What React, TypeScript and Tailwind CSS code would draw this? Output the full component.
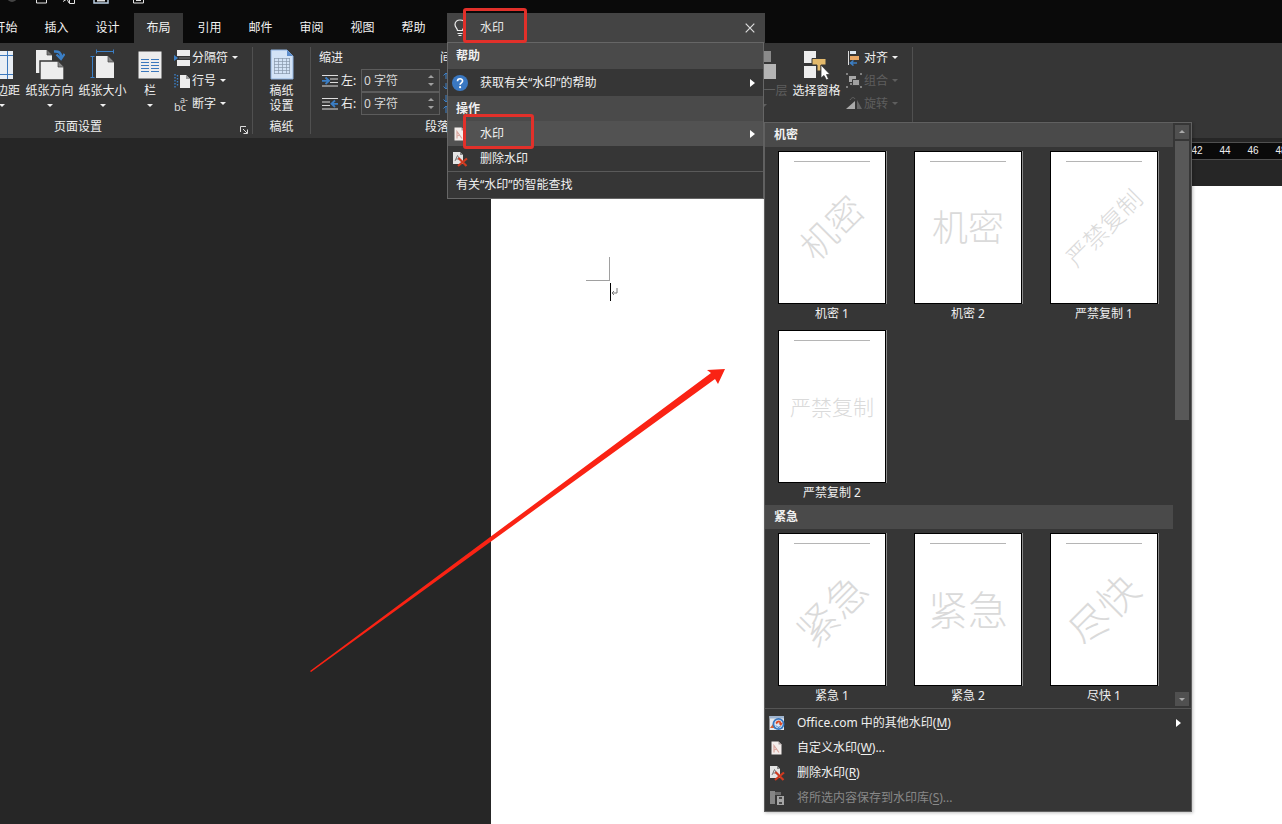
import React, { useState } from 'react';

const tabs = ['开始', '插入', '设计', '布局', '引用', '邮件', '审阅', '视图', '帮助'];
const rulerMarks = [42, 44, 46, 48];

type Mark = { name: string; text: string; style: string };

const galleries: { title: string; items: Mark[] }[] = [
  {
    title: '机密',
    items: [
      { name: '机密 1', text: '机密', style: '-rotate-45 text-[36px] leading-[36px]' },
      { name: '机密 2', text: '机密', style: 'text-[36px] leading-[36px]' },
      { name: '严禁复制 1', text: '严禁复制', style: '-rotate-45 text-[24px] leading-[24px]' },
      { name: '严禁复制 2', text: '严禁复制', style: 'text-[21px] leading-[24px]' },
    ],
  },
  {
    title: '紧急',
    items: [
      { name: '紧急 1', text: '紧急', style: '-rotate-45 text-[40px] leading-[40px]' },
      { name: '紧急 2', text: '紧急', style: 'text-[40px] leading-[40px]' },
      { name: '尽快 1', text: '尽快', style: '-rotate-45 text-[40px] leading-[40px]' },
    ],
  },
];

function Caret() {
  return (
    <svg width="6" height="3" viewBox="0 0 6 3" aria-hidden="true" className="shrink-0">
      <path d="M0 0H6L3 3Z" fill="currentColor" />
    </svg>
  );
}

function RightArrow() {
  return (
    <svg width="5" height="8" viewBox="0 0 5 8" aria-hidden="true" className="shrink-0">
      <path d="M0 0L5 4L0 8Z" fill="#fff" />
    </svg>
  );
}

function MarginsIcon() {
  return (
    <svg width="26" height="30" viewBox="0 0 26 30">
      <rect x="0" y="1" width="24" height="28" fill="#e9eef4" />
      <path d="M5.500 1V29M18.500 1V29M0 5.500H24M0 24.500H24" stroke="#3b78bd" />
    </svg>
  );
}

function OrientationIcon() {
  return (
    <svg width="30" height="32" viewBox="0 0 30 32">
      <path d="M1 1H12L17 6V24H1Z" fill="#ededed" />
      <path d="M12 1V6H17Z" fill="#777" stroke="#444" strokeWidth=".7" />
      <path d="M5 12H23L29 18V31H5Z" fill="#ededed" stroke="#363636" strokeWidth="1.4" />
      <path d="M23 12V18H29Z" fill="#888" stroke="#444" strokeWidth=".7" />
      <path d="M19 2.500C24 2 26 4 26 8" fill="none" stroke="#3b7fc6" strokeWidth="2.600" />
      <path d="M21.500 5.500L26 10L29.500 5" fill="none" stroke="#3b7fc6" strokeWidth="2.200" />
    </svg>
  );
}

function SizeIcon() {
  return (
    <svg width="26" height="32" viewBox="0 0 26 32">
      <path d="M6 7H18L24 13V29H6Z" fill="#ededed" />
      <path d="M18 7V13H24Z" fill="#888" stroke="#444" strokeWidth=".7" />
      <path d="M6 2.500H24M6.500 .5V4.500M23.500 .5V4.500M2.500 7V29M.5 7.500H4.500M.5 28.500H4.500" stroke="#3b7fc6" fill="none" />
    </svg>
  );
}

function ColumnsIcon() {
  return (
    <svg width="24" height="30" viewBox="0 0 24 30">
      <rect x=".5" y="1.500" width="23" height="27" fill="#ededed" />
      <path
        d="M3 9.500H11M13 9.500H21M3 12.500H11M13 12.500H21M3 15.500H11M13 15.500H21M3 18.500H11M13 18.500H21M3 21.500H11M13 21.500H21"
        stroke="#3b78bd"
      />
    </svg>
  );
}

function DraftPaperIcon() {
  return (
    <svg width="24" height="32" viewBox="0 0 24 32">
      <path d="M1 1H17L23 7V30H1Z" fill="#d3e3f6" stroke="#8fb2df" />
      <path d="M17 1V7H23Z" fill="#5d8dcc" />
      <path
        d="M4 9.500H20M4 12.500H20M4 15.500H20M4 18.500H20M4 21.500H20M4 24.500H20M4.500 9V25M8.500 9V25M12.500 9V25M16.500 9V25M19.500 9V25"
        stroke="#8796ab"
        strokeWidth=".7"
      />
    </svg>
  );
}

function BreaksIcon() {
  return (
    <svg width="16" height="16" viewBox="0 0 16 16">
      <path d="M3 0H16V6H3ZM3 10H16V16H3Z" fill="#ededed" />
      <path d="M0 5L4 8L0 11Z" fill="#3b7fc6" />
      <path d="M5 8H16" stroke="#777" />
    </svg>
  );
}

function LineNumbersIcon() {
  return (
    <svg width="16" height="16" viewBox="0 0 16 16">
      <path d="M6 2H12L16 6V15H6Z" fill="#ededed" />
      <path d="M12 2V6H16" fill="#999" />
      <path d="M1 1V15M3.500 2V14" stroke="#3b7fc6" strokeWidth="1.400" strokeDasharray="1.500 1.500" />
    </svg>
  );
}

function HyphenIcon() {
  return (
    <svg width="16" height="16" viewBox="0 0 16 16" aria-hidden="true">
      <text x="0" y="15" fontSize="11" fill="#ddd" fontFamily="Noto Sans, sans-serif">bc</text>
      <text x="6" y="7" fontSize="9" fill="#ddd" fontFamily="Noto Sans, sans-serif">a-</text>
    </svg>
  );
}

function IndentIcon({ right = false }: { right?: boolean }) {
  return (
    <svg width="16" height="14" viewBox="0 0 16 14">
      {right ? (
        <>
          <path d="M0 1.500H16M0 5H8M0 8.500H8M0 12H16" stroke="#ddd" />
          <path d="M16 6.800H10M13 3.500L9.500 6.800L13 10" stroke="#3b7fc6" strokeWidth="1.800" fill="none" />
        </>
      ) : (
        <>
          <path d="M0 1.500H16M8 5H16M8 8.500H16M0 12H16" stroke="#ddd" />
          <path d="M0 6.800H6M3.500 3.500L7 6.800L3.500 10" stroke="#3b7fc6" strokeWidth="1.800" fill="none" />
        </>
      )}
    </svg>
  );
}

function SpacingIcon({ after = false }: { after?: boolean }) {
  return (
    <svg width="12" height="18" viewBox="0 0 12 18">
      {after ? (
        <path d="M3 0V7M.5 4.500L3 7L5.500 4.500M3 18V11M.5 13.500L3 11L5.500 13.500" stroke="#3b7fc6" fill="none" />
      ) : (
        <path d="M3 1V7M.5 3.500L3 1L5.500 3.500M3 17V11M.5 14.500L3 17L5.500 14.500" stroke="#3b7fc6" fill="none" />
      )}
    </svg>
  );
}

function SendBackIcon() {
  return (
    <svg width="26" height="30" viewBox="0 0 26 30">
      <path d="M6 1H20V12H6Z" fill="#8a8a8a" />
      <path d="M8 14H25V29H8Z" fill="#b4b4b4" />
    </svg>
  );
}

function SelectionPaneIcon() {
  return (
    <svg width="28" height="32" viewBox="0 0 28 32">
      <path d="M1 2H13V14H1ZM1 17H13V29H1Z" fill="#ededed" />
      <path d="M9 9.500H23V16H18V22H14V16H9Z" fill="#e3b96b" stroke="#363636" />
      <path d="M18 16V29L21 26.500L23.500 31L25.500 30L23.500 25.500H27Z" fill="#fff" stroke="#363636" strokeWidth=".8" />
    </svg>
  );
}

function AlignIcon() {
  return (
    <svg width="16" height="16" viewBox="0 0 16 16">
      <path d="M2.500 1V15" stroke="#ddd" />
      <path d="M4 1H10V4H4Z" fill="#dce8f4" />
      <path d="M4 6H13V10H4Z" fill="#e8a866" />
      <path d="M11 13H5M7.500 10.500L4.500 13L7.500 15.500" stroke="#3b7fc6" strokeWidth="1.500" fill="none" />
    </svg>
  );
}

function GroupIcon() {
  return (
    <svg width="16" height="16" viewBox="0 0 16 16">
      <path d="M3 3H10V9H3Z" fill="#a8a8a8" />
      <path d="M6.500 6.500H13.500V12.500H6.500Z" fill="#a0a0a0" stroke="#3c3c3c" />
      <path d="M4 10H6V12H4Z" fill="#8a8a8a" />
      <path d="M0 1H2M14 1H16M0 14H2M14 14H16" stroke="#808080" strokeWidth="2" />
    </svg>
  );
}

function RotateIcon() {
  return (
    <svg width="16" height="16" viewBox="0 0 16 16">
      <path d="M0 13H9V5Z" fill="#aaa" />
      <path d="M11 4V13H16Z" fill="#666" />
      <path d="M4 4C6 1 8 1 9 3" stroke="#666" fill="none" />
    </svg>
  );
}

function WatermarkIcon() {
  return (
    <svg width="16" height="16" viewBox="0 0 16 16" className="shrink-0">
      <path d="M2.500 1.500H9.500L12.500 4.500V14.500H2.500Z" fill="#f4eeec" />
      <path d="M9.500 1.500V4.500H12.500Z" fill="#a9a0a0" />
      <path d="M5 12.500V5.500L10 12.500M5 10L8 9" stroke="#d9a79f" strokeWidth="1.200" fill="none" />
    </svg>
  );
}

function RemoveWatermarkIcon() {
  return (
    <svg width="16" height="16" viewBox="0 0 16 16" className="shrink-0">
      <path d="M1 1H8L11 4V13H1Z" fill="#e4e4e4" />
      <path d="M8 1V4H11Z" fill="#888" />
      <path d="M3 10L5.500 4.500L8 9M4 8H7" stroke="#777" fill="none" />
      <path d="M6.500 7L14.500 15M15 7.500L6 15" stroke="#d03a20" strokeWidth="2.200" />
    </svg>
  );
}

function OfficeWebIcon() {
  return (
    <svg width="17" height="16" viewBox="0 0 17 16" className="shrink-0">
      <path d="M.5 1H15V15H.5Z" fill="#e6e9ee" />
      <path d="M.5 1H15V3.500H.5Z" fill="#9fb4cf" />
      <path d="M1 13H7L4 9Z" fill="#d9622f" />
      <circle cx="9.500" cy="9" r="6" fill="#3777c0" />
      <circle cx="9.500" cy="9" r="4.200" fill="#dbe9f7" />
      <path d="M6.500 8C8 4.500 12 5 12.500 8L14 7.500L12 11L9.500 8.500L11 8.300C10.500 7 8.500 7 8 9.500Z" fill="#dc4a26" />
      <path d="M7 10.500L9 12.500L11.500 11.500" stroke="#3777c0" fill="none" />
    </svg>
  );
}

function SaveGalleryIcon() {
  return (
    <svg width="16" height="16" viewBox="0 0 16 16" className="shrink-0">
      <path d="M1 1H6V14H1Z" fill="#858585" />
      <path d="M6 2H12V5H6Z" fill="#6d6d6d" />
      <path d="M8 6H15V15H8Z" fill="#a5a5a5" />
      <path d="M10 7H13V9H10ZM10 12H13V14H10Z" fill="#4a4a4a" />
    </svg>
  );
}

function HelpIcon() {
  return (
    <svg width="16" height="16" viewBox="0 0 16 16" className="shrink-0">
      <circle cx="8" cy="8" r="8" fill="#3a78c2" />
      <path d="M5.500 6.200C5.500 3 10.600 3 10.600 6C10.600 7.800 8.100 7.900 8.100 9.700" stroke="#fff" strokeWidth="1.600" fill="none" />
      <circle cx="8.100" cy="12.200" r="1.100" fill="#fff" />
    </svg>
  );
}

function BigButton({
  icon,
  label,
  width,
  caret = true,
  disabled = false,
}: {
  icon: React.ReactNode;
  label: string[];
  width: string;
  caret?: boolean;
  disabled?: boolean;
}) {
  return (
    <button
      disabled={disabled}
      className={`flex shrink-0 flex-col items-center pt-[3px] whitespace-nowrap ${width} ${disabled ? 'text-[#5e5e5e]' : 'text-[#f0f0f0]'}`}
    >
      <span className="mb-0.5 flex h-8 items-center">{icon}</span>
      {label.map((line) => (
        <span key={line} className="leading-[15px]">{line}</span>
      ))}
      {caret && (
        <span className="flex h-[15px] items-center">
          <Caret />
        </span>
      )}
    </button>
  );
}

function SmallButton({ icon, label, disabled = false }: { icon: React.ReactNode; label: string; disabled?: boolean }) {
  return (
    <button
      disabled={disabled}
      className={`flex h-[23px] items-center whitespace-nowrap ${disabled ? 'text-[#5e5e5e]' : 'text-[#f0f0f0]'}`}
    >
      <span className="mr-0.5 w-4">{icon}</span>
      <span className="mr-1">{label}</span>
      <Caret />
    </button>
  );
}

function IndentField({ id, label, right = false }: { id: string; label: string; right?: boolean }) {
  return (
    <div className="flex h-[23px] items-center">
      <IndentIcon right={right} />
      <label htmlFor={id} className="ml-[3px] w-5">{label}</label>
      <div className="flex h-[23px] w-[79px] border border-[#5c5c5c] bg-[#3b3b3b]">
        <input id={id} defaultValue="0 字符" className="w-0 min-w-0 flex-1 bg-transparent pl-0.5 text-[#d8d8d8] outline-none" />
        <span className="flex w-4 flex-col items-center justify-evenly text-[#a0a0a0]">
          <button aria-label="增加" className="rotate-180"><Caret /></button>
          <button aria-label="减少"><Caret /></button>
        </span>
      </div>
    </div>
  );
}

function Divider() {
  return <div className="mt-1 mb-1 w-px shrink-0 bg-[#505050]" />;
}

function RibbonGroup({ label, className, children }: { label: string; className: string; children: React.ReactNode }) {
  return (
    <section className={`flex shrink-0 flex-col pt-[3px] pb-[3px] ${className}`}>
      <div className="flex flex-1">{children}</div>
      <div className="h-4 text-center leading-4">{label}</div>
    </section>
  );
}

function Ribbon() {
  return (
    <div className="flex h-[95px] bg-[#363636] text-[#f0f0f0]">
      <RibbonGroup label="页面设置" className="relative -ml-24 w-[348px]">
        <div className="flex pl-[77px]">
          <BigButton icon={<MarginsIcon />} label={['页边距']} width="w-[42px]" />
          <BigButton icon={<OrientationIcon />} label={['纸张方向']} width="w-[53px]" />
          <BigButton icon={<SizeIcon />} label={['纸张大小']} width="w-[53px]" />
          <BigButton icon={<ColumnsIcon />} label={['栏']} width="w-[42px]" />
          <div className="ml-[3px] flex flex-col">
            <SmallButton icon={<BreaksIcon />} label="分隔符" />
            <SmallButton icon={<LineNumbersIcon />} label="行号" />
            <SmallButton icon={<HyphenIcon />} label="断字" />
          </div>
        </div>
        <button aria-label="页面设置选项" className="absolute right-1 bottom-1">
          <svg width="8" height="8" viewBox="0 0 8 8" aria-hidden="true">
            <path d="M.5 6V.5H6M3 3L7 7M7.500 3.500V7.500H3.500" stroke="#ddd" fill="none" />
          </svg>
        </button>
      </RibbonGroup>
      <Divider />
      <RibbonGroup label="稿纸" className="w-[57px] items-center">
        <BigButton icon={<DraftPaperIcon />} label={['稿纸', '设置']} width="w-[48px]" caret={false} />
      </RibbonGroup>
      <Divider />
      <RibbonGroup label="段落" className="w-[252px]">
        <div className="flex pl-2">
          <div>
            <div className="h-[23px] leading-[23px]">缩进</div>
            <div className="pl-[3px]">
              <IndentField id="indent-left" label="左:" />
              <IndentField id="indent-right" label="右:" right />
            </div>
          </div>
          <div>
            <div className="h-[23px] leading-[23px]">间距</div>
            <div className="flex h-[23px] items-center pl-[3px]"><SpacingIcon /></div>
            <div className="flex h-[23px] items-center pl-[3px]"><SpacingIcon after /></div>
          </div>
        </div>
      </RibbonGroup>
      <RibbonGroup label="" className="w-[349px]">
        <div className="flex flex-1 justify-end">
          <BigButton icon={<SendBackIcon />} label={['下移一层']} width="w-[53px]" disabled />
          <BigButton icon={<SelectionPaneIcon />} label={['选择窗格']} width="w-[53px]" caret={false} />
          <div className="ml-[3px] flex w-[66px] flex-col">
            <SmallButton icon={<AlignIcon />} label="对齐" />
            <SmallButton icon={<GroupIcon />} label="组合" disabled />
            <SmallButton icon={<RotateIcon />} label="旋转" disabled />
          </div>
        </div>
      </RibbonGroup>
      <Divider />
    </div>
  );
}

function GallerySection({ title, items }: { title: string; items: Mark[] }) {
  return (
    <section>
      <h3 className="h-6 bg-[#4a4a4a] pl-[9px] leading-6 font-bold">{title}</h3>
      <div className="grid grid-cols-[repeat(3,108px)] gap-x-7 gap-y-[7px] pt-1 pb-[3px] pl-[13px]">
        {items.map((item) => (
          <button key={item.name} className="flex flex-col">
            <span className="flex h-[153px] w-full flex-col border border-black bg-white px-[15px] pt-[9px] shadow-[1px_0_0_#8a8a8a]">
              <span className="h-px bg-[#b5b5b5]" />
              <span className="flex flex-1 items-center justify-center pb-[10px]">
                <span className={`shrink-0 font-light whitespace-nowrap text-[#dadada] ${item.style}`}>{item.text}</span>
              </span>
            </span>
            <span className="h-[19px] w-full text-center leading-[19px]">{item.name}</span>
          </button>
        ))}
      </div>
    </section>
  );
}

function GalleryCommand({
  icon,
  text,
  hotkey,
  tail = '',
  disabled = false,
  more = false,
}: {
  icon: React.ReactNode;
  text: string;
  hotkey: string;
  tail?: string;
  disabled?: boolean;
  more?: boolean;
}) {
  return (
    <button disabled={disabled} className={`flex h-[25px] w-full items-center pr-[10px] pl-1 ${disabled ? 'text-[#888]' : ''}`}>
      <span className="w-7">{icon}</span>
      <span className="flex-1 text-left">
        {text}(<span className="underline underline-offset-2">{hotkey}</span>){tail}
      </span>
      {more && <RightArrow />}
    </button>
  );
}

function WatermarkGallery() {
  return (
    <div className="absolute top-[79px] left-[316px] w-[428px] border border-[#606060] bg-[#363636] text-[#f0f0f0] shadow-[1px_1px_3px_rgba(0,0,0,0.25)]">
      <div className="flex">
        <div className="w-[408px]">
          {galleries.map((g) => (
            <GallerySection key={g.title} title={g.title} items={g.items} />
          ))}
        </div>
        <div className="flex flex-1 flex-col items-center pt-0.5 pb-0.5">
          <button aria-label="向上滚动" className="flex h-[14px] w-[14px] rotate-180 items-center justify-center bg-[#505050] text-[#aaa]">
            <Caret />
          </button>
          <div className="mt-0.5 h-[279px] w-[14px] bg-[#585858]" />
          <button aria-label="向下滚动" className="mt-auto flex h-[14px] w-[14px] items-center justify-center bg-[#505050] text-[#aaa]">
            <Caret />
          </button>
        </div>
      </div>
      <div className="border-t border-[#555] pt-px pb-px">
        <GalleryCommand icon={<OfficeWebIcon />} text="Office.com 中的其他水印" hotkey="M" more />
        <GalleryCommand icon={<WatermarkIcon />} text="自定义水印" hotkey="W" tail="..." />
        <GalleryCommand icon={<RemoveWatermarkIcon />} text="删除水印" hotkey="R" />
        <GalleryCommand icon={<SaveGalleryIcon />} text="将所选内容保存到水印库" hotkey="S" tail="..." disabled />
      </div>
    </div>
  );
}

function SearchMenu() {
  return (
    <div className="absolute top-[29px] left-0 z-10 w-[317px] border border-[#666] bg-[#363636] text-[#f0f0f0]">
      <h2 className="h-[26px] bg-[#4a4a4a] pl-2 leading-[26px] font-bold">帮助</h2>
      <button className="flex h-[27px] w-full items-center pr-2 pl-1">
        <span className="w-7"><HelpIcon /></span>
        <span className="flex-1 text-left">获取有关“水印”的帮助</span>
        <RightArrow />
      </button>
      <h2 className="h-[25px] bg-[#4a4a4a] pl-2 leading-[25px] font-bold">操作</h2>
      <button className="relative flex h-[25px] w-full items-center bg-[#525252] pr-2 pl-1">
        <span className="w-7"><WatermarkIcon /></span>
        <span className="flex-1 text-left">水印</span>
        <RightArrow />
        <span className="absolute -top-[7px] left-[15px] h-[35px] w-[71px] rounded-[3px] border-[3px] border-[#e2302a]" />
      </button>
      <button className="flex h-[25px] w-full items-center pl-1">
        <span className="w-7"><RemoveWatermarkIcon /></span>
        <span>删除水印</span>
      </button>
      <button className="block h-[27px] w-full border-t border-[#5a5a5a] pl-2 text-left">有关“水印”的智能查找</button>
      <WatermarkGallery />
    </div>
  );
}

function SearchBox() {
  const [query, setQuery] = useState('水印');
  return (
    <div className="relative ml-[9px] flex h-[30px] w-[318px] shrink-0 items-center bg-[#444] pr-[10px] pl-[7px]">
      <svg width="12" height="18" viewBox="0 0 12 18" aria-hidden="true">
        <path d="M3.500 11.500C3.500 9.500 1 8.500 1 5.500C1 2.500 3.300 1 6 1S11 2.500 11 5.500C11 8.500 8.500 9.500 8.500 11.500ZM3.500 14.500H8.500M4.500 16.500H7.500" stroke="#eee" strokeWidth="1.200" fill="none" />
      </svg>
      <input
        aria-label="操作说明搜索"
        value={query}
        onChange={(e) => setQuery(e.target.value)}
        className="ml-[14px] min-w-0 flex-1 bg-transparent text-[#e8e8e8] outline-none"
      />
      <button aria-label="清除搜索" onClick={() => setQuery('')}>
        <svg width="10" height="10" viewBox="0 0 10 10" aria-hidden="true">
          <path d="M.7 .7L9.300 9.300M9.300 .7L.7 9.300" stroke="#ddd" strokeWidth="1.200" />
        </svg>
      </button>
      <SearchMenu />
      <span className="pointer-events-none absolute -top-[5px] left-4 z-20 h-[35px] w-16 rounded-[3px] border-[3px] border-[#e2302a]" />
    </div>
  );
}

export default function App() {
  return (
    <div className="relative flex min-h-screen flex-col overflow-hidden bg-[#262626] font-['Noto_Sans','Noto_Sans_CJK_SC',sans-serif] text-[12px] leading-4">
      <header className="bg-[#0a0a0a]">
        <svg width="160" height="13" viewBox="0 0 160 13" aria-hidden="true" className="block">
          <circle cx="12" cy="-3" r="5" fill="#444" />
          <path d="M36.500 -4V3H46.500V-4M69.500 -4V3.500H74.500V-4M63 1.500L67 -1L69 3M133.500 -4V3H143.500V-4M136 .5H141" stroke="#e4e4e4" fill="none" />
          <path d="M94 -4V3H108V-4" stroke="#bcd0e4" strokeWidth="1.500" fill="none" />
          <path d="M97 0H105V1.500H97Z" fill="#e4e4e4" />
        </svg>
        <div className="flex h-[30px]">
          <nav className="-ml-[19px] flex shrink-0 gap-0.5">
            {tabs.map((tab) => (
              <button
                key={tab}
                className={`w-[49px] text-center text-[#f2f2f2] ${tab === '布局' ? 'bg-[#363636]' : ''}`}
              >
                {tab}
              </button>
            ))}
          </nav>
          <SearchBox />
        </div>
      </header>
      <Ribbon />
      <main className="flex flex-1 flex-col pt-1 pl-[491px]">
        <div className="flex h-[18px] shrink-0 items-center overflow-hidden border-y border-[#505050] bg-[#0a0a0a] pl-[692px] font-['Liberation_Sans',sans-serif] text-[10px] text-[#eee]">
          {rulerMarks.map((n) => (
            <span key={n} className="w-7 shrink-0 text-center">{n}</span>
          ))}
        </div>
        <div className="mt-[26px] flex-1 bg-white pt-[71px] pl-[95px]">
          <div className="h-6 w-6 border-r border-b border-[#a0a0a0]" />
          <div className="mt-0.5 flex items-center pl-6">
            <span className="h-[18px] w-px bg-black" />
            <svg width="7" height="9" viewBox="0 0 7 9" aria-hidden="true">
              <path d="M6 0V5H1M3 3L1 5L3 7" stroke="#777" fill="none" />
            </svg>
          </div>
        </div>
      </main>
      <svg
        width="415"
        height="303"
        viewBox="310 369 415 303"
        aria-hidden="true"
        className="pointer-events-none absolute top-[369px] left-[310px]"
      >
        <path d="M310 671L711 373L707 370L725 369L718 384L715 379L311 672Z" fill="#fa2314" />
      </svg>
    </div>
  );
}
